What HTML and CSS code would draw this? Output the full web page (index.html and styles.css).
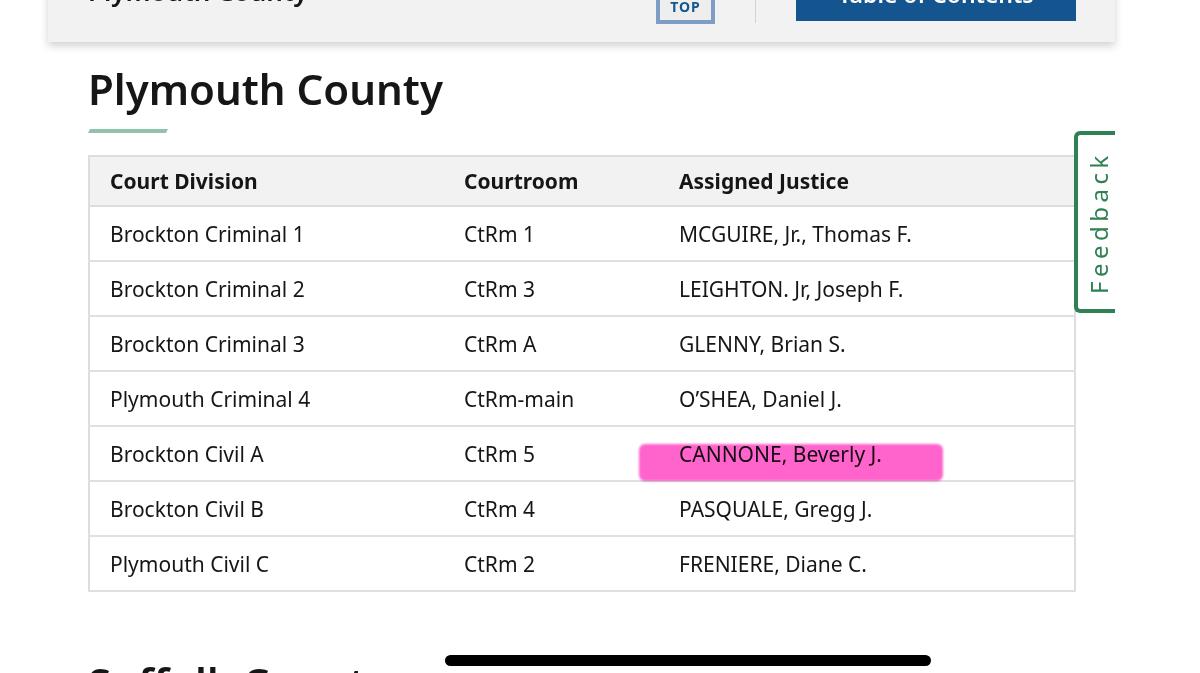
FILE: index.html
```html
<!DOCTYPE html>
<html lang="en">
<head>
<meta charset="utf-8">
<title>Plymouth County</title>
<link rel="stylesheet" href="styles.css">
</head>
<body>
<header class="sticky">
  <div class="sticky-title">Plymouth County</div>
  <a class="top-btn" href="#">TOP</a>
  <span class="sep"></span>
  <a class="toc-btn" href="#">Table of Contents</a>
</header>
<main class="content">
  <h2 class="county">Plymouth County</h2>
  <div class="rule"></div>
  <table class="courts">
    <colgroup><col class="c1"><col class="c2"><col class="c3"></colgroup>
    <thead>
      <tr><th>Court Division</th><th>Courtroom</th><th>Assigned Justice</th></tr>
    </thead>
    <tbody>
      <tr><td>Brockton Criminal 1</td><td>CtRm 1</td><td>MCGUIRE, Jr., Thomas F.</td></tr>
      <tr><td>Brockton Criminal 2</td><td>CtRm 3</td><td>LEIGHTON. Jr, Joseph F.</td></tr>
      <tr><td>Brockton Criminal 3</td><td>CtRm A</td><td>GLENNY, Brian S.</td></tr>
      <tr><td>Plymouth Criminal 4</td><td>CtRm-main</td><td>O’SHEA, Daniel J.</td></tr>
      <tr><td>Brockton Civil A</td><td>CtRm 5</td><td class="hl-cell"><span class="hl"></span>CANNONE, Beverly J.</td></tr>
      <tr><td>Brockton Civil B</td><td>CtRm 4</td><td>PASQUALE, Gregg J.</td></tr>
      <tr><td>Plymouth Civil C</td><td>CtRm 2</td><td>FRENIERE, Diane C.</td></tr>
    </tbody>
  </table>
  <h2 class="county next">Suffolk County</h2>
</main>
<a class="feedback" href="#"><span>Feedback</span></a>
<div class="home-bar"></div>
</body>
</html>
```

FILE: styles.css
```css
html, body {
  margin: 0;
  padding: 0;
  background: #ffffff;
  height: 673px;
  overflow: hidden;
  font-family: "Noto Sans", "Open Sans", "Liberation Sans", sans-serif;
  color: #161616;
}

.sticky {
  display: flex;
  align-items: flex-end;
  box-sizing: border-box;
  height: 80px;
  margin: -38px 0 0 48px;
  width: 1067px;
  padding: 0 39px 18px 40px;
  background: #f2f2f2;
  box-shadow: 0 4px 8px rgba(0, 0, 0, 0.18);
  position: relative;
  z-index: 2;
}

.sticky-title {
  flex: 1;
  font-size: 26px;
  font-weight: 600;
  line-height: 32px;
  margin-bottom: 17px;
  color: #161616;
}

.top-btn {
  box-sizing: border-box;
  width: 59px;
  height: 50px;
  border: 4px solid #7d9dc5;
  background: #eeeeee;
  color: #14558f;
  font-size: 14px;
  font-weight: 700;
  letter-spacing: 1px;
  text-decoration: none;
  display: flex;
  align-items: flex-end;
  justify-content: center;
  padding-bottom: 6px;
  line-height: 14px;
}

.sep {
  width: 1px;
  height: 60px;
  background: #d2d2d2;
  margin: 0 40px 1px 40px;
}

.toc-btn {
  box-sizing: border-box;
  width: 280px;
  height: 50px;
  margin-bottom: 3px;
  background: #14558f;
  color: #ffffff;
  font-size: 23px;
  font-weight: 600;
  text-decoration: none;
  display: flex;
  align-items: flex-end;
  justify-content: center;
  line-height: 30px;
  padding-bottom: 12px;
}

.content {
  padding: 0 0 0 88px;
}

.county {
  margin: 22px 0 0 0;
  font-size: 42px;
  font-weight: 600;
  line-height: 50px;
  color: #161616;
}

.rule {
  width: 80px;
  height: 4px;
  margin-top: 15px;
  background: #92c2aa;
  clip-path: polygon(2px 0, 80px 0, 78px 4px, 0 4px);
}

.courts {
  margin-top: 22px;
  width: 988px;
  border-collapse: collapse;
  border: 2px solid #dddddd;
  font-size: 21px;
  table-layout: fixed;
}

.c1 { width: 355px; }
.c2 { width: 215px; }

.courts th {
  background: #f2f2f2;
  text-align: left;
  font-weight: 700;
  height: 48px;
  padding: 0 20px;
  border-bottom: 2px solid #dddddd;
  vertical-align: middle;
}

.courts td {
  height: 53px;
  padding: 0 20px;
  border-bottom: 2px solid #e0e0e0;
  vertical-align: middle;
  line-height: 28px;
}

.hl-cell {
  position: relative;
}

.hl {
  position: absolute;
  left: -20px;
  top: 17px;
  width: 304px;
  height: 37px;
  background: #ff64cc;
  border-radius: 6px;
  mix-blend-mode: multiply;
  filter: blur(0.8px);
}

.county.next {
  margin-top: 66px;
}

.feedback {
  position: absolute;
  left: 1074px;
  top: 131px;
  box-sizing: border-box;
  width: 41px;
  height: 182px;
  border: 4px solid #2f8053;
  border-right: none;
  border-radius: 6px 0 0 6px;
  background: #ffffff;
  color: #2f8053;
  text-decoration: none;
  display: flex;
  align-items: center;
  justify-content: center;
  z-index: 3;
}

.feedback span {
  transform: rotate(-90deg);
  font-size: 24px;
  letter-spacing: 4.5px;
  white-space: nowrap;
  margin-left: 4px;
}

.home-bar {
  position: absolute;
  left: 445px;
  top: 655px;
  width: 486px;
  height: 11px;
  border-radius: 6px;
  background: #000000;
  z-index: 4;
}
```
